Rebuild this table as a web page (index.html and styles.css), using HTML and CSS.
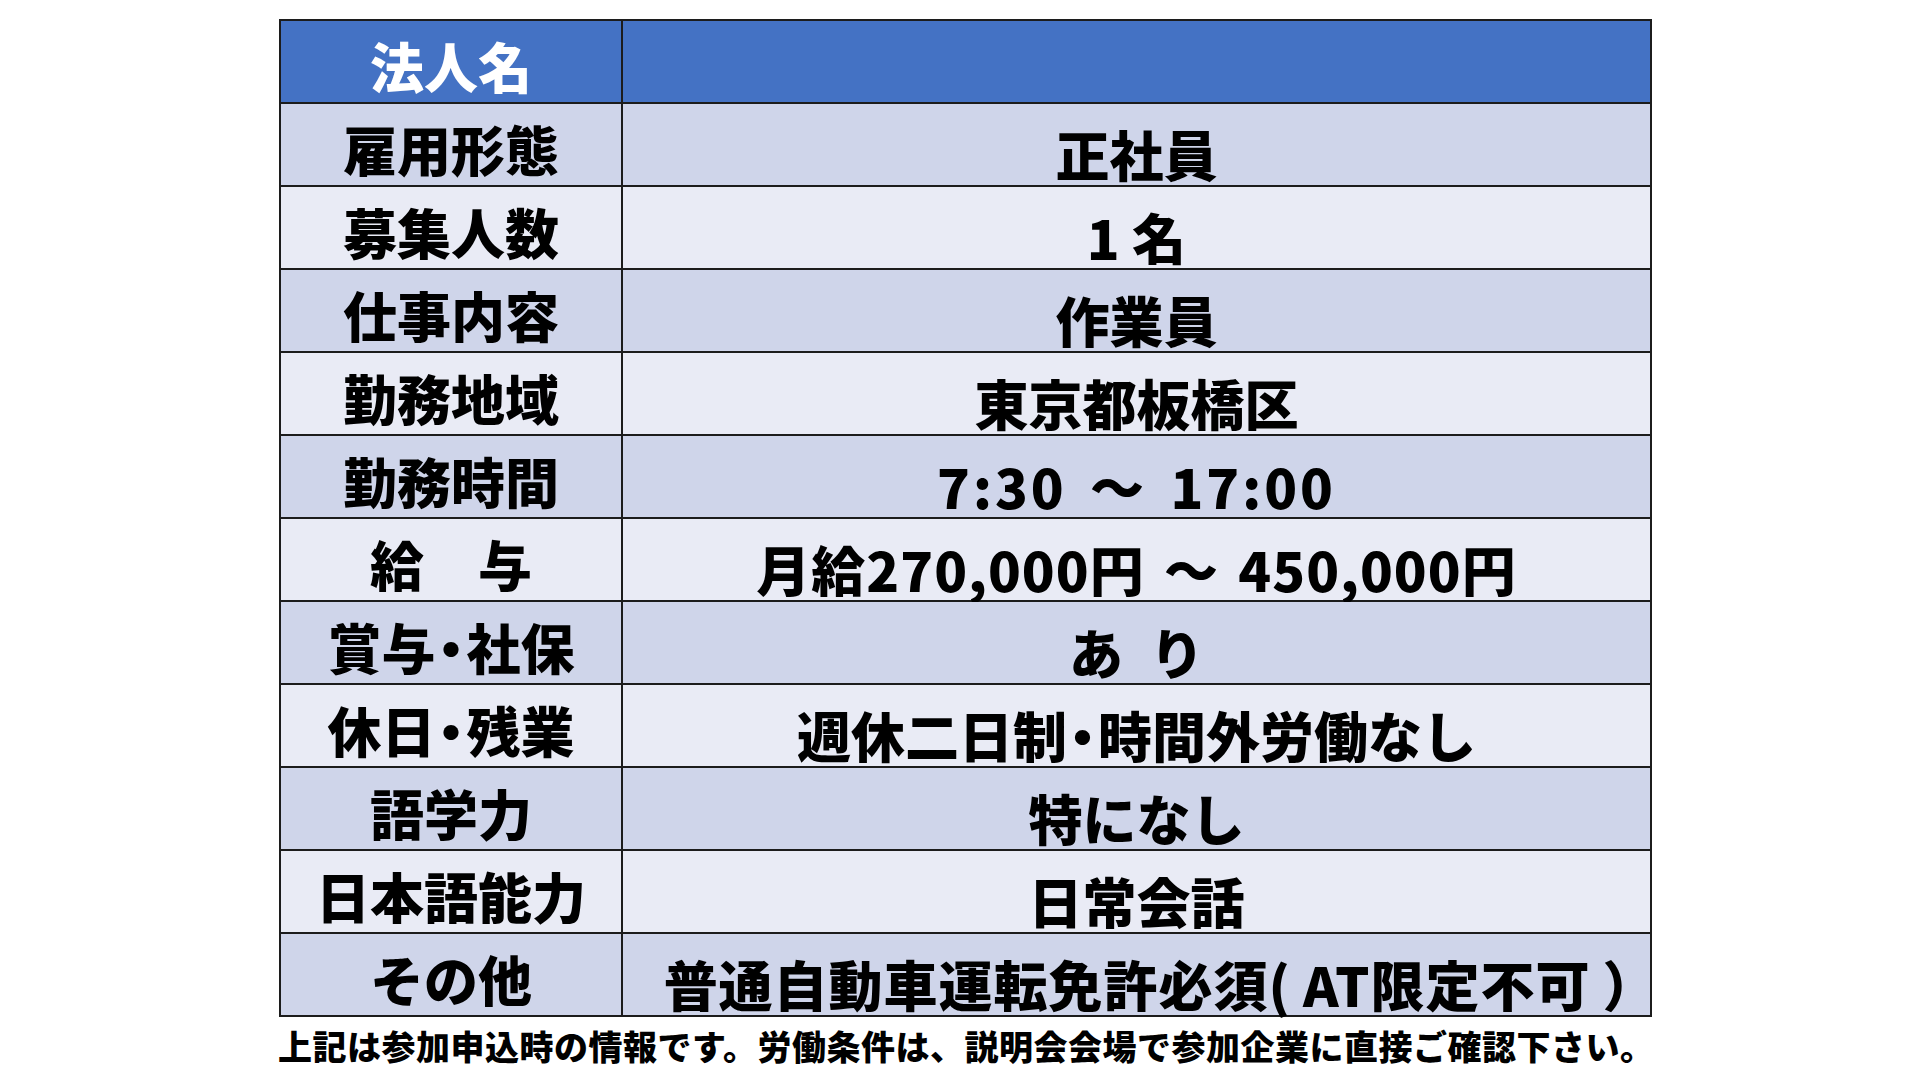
FILE: index.html
```html
<!DOCTYPE html>
<html lang="ja">
<head>
<meta charset="utf-8">
<title>求人票</title>
<link rel="stylesheet" href="styles.css">
</head>
<body>
<main class="page">
  <div class="sheet">
    <div class="cell label head">法人名</div>
    <div class="cell value head"></div>

    <div class="cell label odd">雇用形態</div>
    <div class="cell value odd">正社員</div>

    <div class="cell label even">募集人数</div>
    <div class="cell value even">1 名</div>

    <div class="cell label odd">仕事内容</div>
    <div class="cell value odd">作業員</div>

    <div class="cell label even">勤務地域</div>
    <div class="cell value even">東京都板橋区</div>

    <div class="cell label odd">勤務時間</div>
    <div class="cell value odd time">7:30 ～ 17:00</div>

    <div class="cell label even">給　与</div>
    <div class="cell value even salary">月給270,000円 ～ 450,000円</div>

    <div class="cell label odd"><span>賞与<span class="dot">・</span>社保</span></div>
    <div class="cell value odd">あ&ensp;り</div>

    <div class="cell label even"><span>休日<span class="dot">・</span>残業</span></div>
    <div class="cell value even"><span>週休二日制<span class="dot">・</span>時間外労働なし</span></div>

    <div class="cell label odd">語学力</div>
    <div class="cell value odd">特になし</div>

    <div class="cell label even">日本語能力</div>
    <div class="cell value even">日常会話</div>

    <div class="cell label odd">その他</div>
    <div class="cell value odd wide">普通自動車運転免許必須(&thinsp;AT限定不可&thinsp;）</div>
  </div>
  <p class="note">上記は参加申込時の情報です。労働条件は、説明会会場で参加企業に直接ご確認下さい。</p>
</main>
</body>
</html>
```

FILE: styles.css
```css
html, body {
  margin: 0;
  padding: 0;
  background: #ffffff;
}

body {
  font-family: "Noto Sans CJK JP", "Noto Sans", sans-serif;
  color: #000000;
}

.page {
  padding: 19px 0 0 279px;
  width: 1373px;
}

.sheet {
  display: grid;
  grid-template-columns: 340px 1027px;
  grid-auto-rows: 81px;
  gap: 2px;
  padding: 2px;
  background: #1c1c1c;
  width: 1369px;
}

.cell {
  display: flex;
  align-items: center;
  justify-content: center;
  font-size: 54px;
  font-weight: 900;
  line-height: 1;
  white-space: nowrap;
}

.label {
  padding-top: 8px;
}

.value {
  padding-top: 18px;
}

.head {
  background: #4472c4;
  color: #ffffff;
}

.odd {
  background: #cfd5ea;
}

.even {
  background: #e9ebf5;
}

.dot {
  font-feature-settings: "palt";
  padding: 0 2px;
}

.time {
  letter-spacing: 3px;
  word-spacing: 8px;
}

.salary {
  letter-spacing: 1px;
  word-spacing: 6px;
}

.wide {
  letter-spacing: 1px;
  padding-left: 48px;
}

.note {
  margin: 9px 0 0 -1px;
  font-size: 34px;
  font-weight: 900;
  line-height: 40px;
  letter-spacing: 0.5px;
  white-space: nowrap;
}
```
